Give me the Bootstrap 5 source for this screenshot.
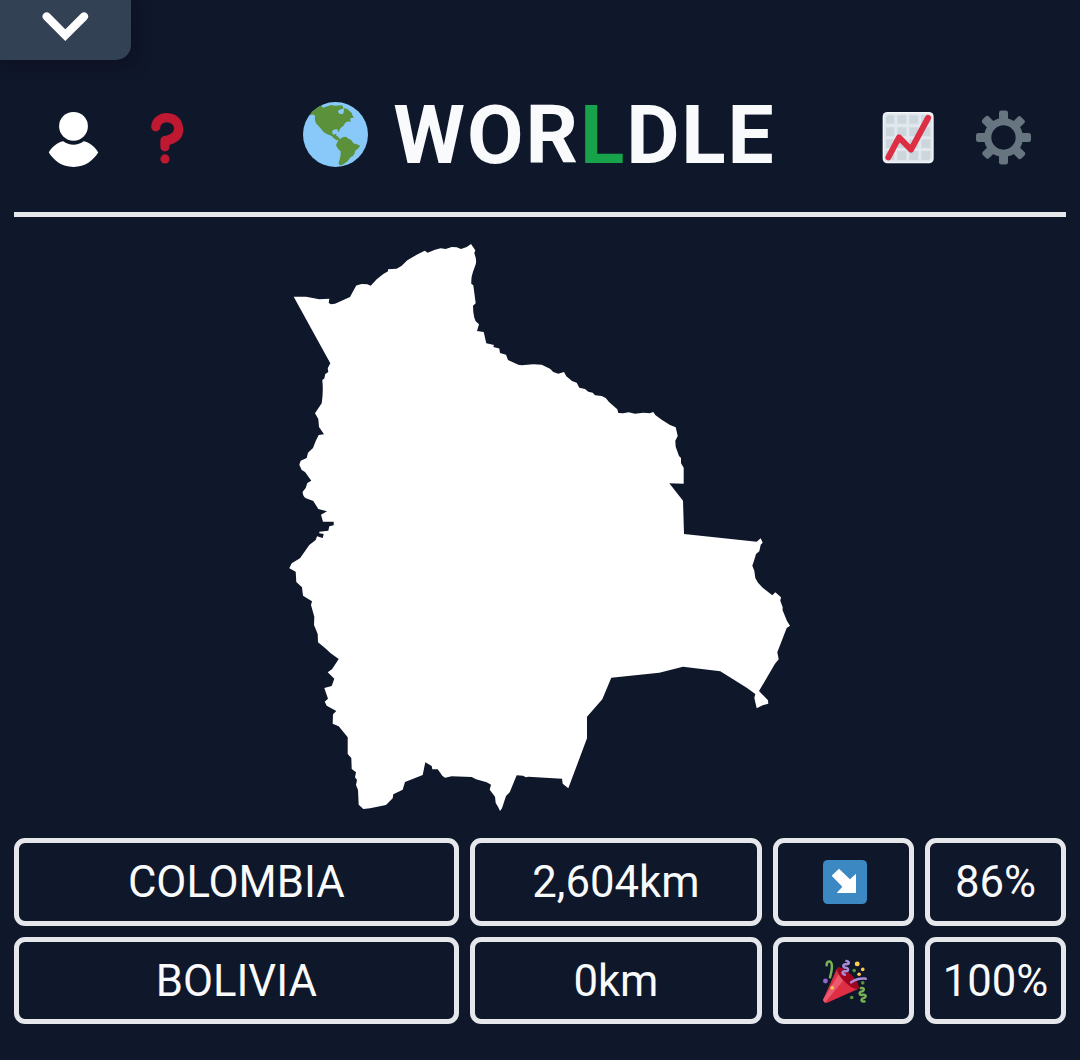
<!DOCTYPE html>
<html lang="en">
<head>
<meta charset="utf-8">
<meta name="viewport" content="width=device-width, initial-scale=1">
<title>Worldle</title>
<link href="https://cdn.jsdelivr.net/npm/bootstrap@5.3.0/dist/css/bootstrap.min.css" rel="stylesheet">
<style>
  body { background: #0f172a; color: #f9fafb; font-family: Roboto, "Liberation Sans", sans-serif; min-height: 1060px; overflow: hidden; }
  svg { display: block; flex: none; }
  .drawer-tab { top: 0; left: 0; width: 131px; height: 60px; background: #334155; border-radius: 0 0 15px 0; box-shadow: 4px 4px 14px 2px rgba(15, 15, 35, .75); }
  .page-shell { padding: 0 14px; }
  .top-bar { height: 217px; border-bottom: 5px solid #e5e7eb; padding: 102px 35px 0 32px; }
  .left-tools { gap: 38px; padding-top: 7px; }
  .help-icon { margin-top: 1px; }
  .right-tools { gap: 40px; padding-top: 7.5px; }
  .brand { gap: 25px; margin-left: 4px; }
  .brand-name { font-size: 82px; line-height: 80px; font-weight: 700; letter-spacing: 1.9px; margin: -7px 0 0; }
  .brand-name span { color: #16a34a; }
  .country-wrap { height: 621px; }
  .guess-grid { display: grid; grid-template-columns: repeat(7, minmax(0, 1fr)); column-gap: 10.9px; row-gap: 11px; grid-template-rows: 88px 87px; }
  .guess-cell { border: 5px solid #e5e7eb; border-radius: 11px; font-size: 43.7px; line-height: 46px; white-space: nowrap; }
  .emoji-cell { padding-left: 2px; }
  .span-3 { grid-column: span 3; }
  .span-2 { grid-column: span 2; }
</style>
<script src="https://cdn.jsdelivr.net/npm/bootstrap@5.3.0/dist/js/bootstrap.bundle.min.js"></script>
</head>
<body>
<button class="drawer-tab position-absolute border-0 p-0" aria-label="Open menu">
  <svg width="131" height="60" viewBox="0 0 131 60"><path d="M46.7 16.5L65.3 35.2L84 16.5" fill="none" stroke="#fff" stroke-width="8.2" stroke-linecap="round"/></svg>
</button>
<div class="page-shell">
  <header class="top-bar d-flex justify-content-between">
    <div class="left-tools d-flex align-self-start">
      <svg width="55" height="60" viewBox="46 109 55 60" fill="#fff"><circle cx="73.5" cy="126.3" r="14.4"/><path d="M48.8 152.5C51.500 147.500 57 142.500 63.300 141.300C69 145.800 78 145.800 83.600 141.300C90 142.500 95.500 147.500 98.200 152.500C93 160.500 85.500 166.900 73.500 166.900C61.500 166.900 54 160.500 48.800 152.500Z"/></svg>
      <svg class="help-icon" width="55" height="55" viewBox="0 0 36 36" fill="#BE1931"><path d="M17 27c-1.657 0-3-1.343-3-3v-4c0-1.657 1.343-3 3-3 .603-.006 6-1 6-5 0-2-2-4-5-4-2.441 0-4 2-4 3 0 1.657-1.343 3-3 3s-3-1.343-3-3c0-4.878 4.580-9 10-9 8 0 11 5.982 11 11 0 4.145-2.277 7.313-6.413 8.920-.9.351-1.790.587-2.587.747V24c0 1.657-1.343 3-3 3z"/><circle cx="17" cy="32" r="3"/></svg>
    </div>
    <div class="brand d-flex align-items-start">
      <svg width="65" height="65" viewBox="39 66 195 195"><circle cx="136.500" cy="163.500" r="97.500" fill="#88C9F9"/><path fill="#5C913B" d="M57 107Q74 84 97 74L96 80Q97 85 103 82Q115 77 125 75L134 77L155 76Q162 81 158 87Q144 88 144 96Q147 103 156 103Q164 99 161 85Q170 84 178 92Q187 98 187 106L192 112Q188 115 181 114L182 125Q172 123 166 128Q160 141 152 144Q147 149 147 157Q144 156 142 148Q131 146 127 153Q125 162 130 164L139 161L139 168Q147 169 146 173L150 177Q156 170 168 170L175 176Q184 177 190 190L205 194Q212 197 209 200Q203 207 196 212Q194 224 188 229Q181 229 178 237Q173 245 161 252Q154 257 149 255Q143 251 149 239Q153 226 152 214Q143 208 138 196L141 188L145 181Q134 180 125 168L110 162Q99 156 91 144L78 130Q73 120 75 108Q72 102 66 104L60 106Z"/></svg>
      <h1 class="brand-name">WOR<span>L</span>DLE</h1>
    </div>
    <div class="right-tools d-flex align-self-start">
      <svg width="55" height="55" viewBox="63 88 165 165"><rect x="68" y="94" width="153" height="154" rx="14" fill="#F5F8FA"/><rect x="72" y="98" width="145" height="146" rx="11" fill="#E1E8ED"/><g fill="#CCD6DD"><path d="M85 104h18v25H78v-18q1-7 7-7zM112 104h27v25h-27zM148 104h27v25h-27zM184 104h20q7 1 7 7v18h-27z"/><path d="M78 140h25v27H78zM112 140h27v27h-27zM148 140h27v27h-27zM184 140h27v27h-27zM78 176h25v26H78zM112 176h27v26h-27zM148 176h27v26h-27zM184 176h27v26h-27zM78 211h25v27H86q-7-1-8-8zM112 211h27v27h-27zM148 211h27v27h-27zM184 211h27v20q-1 6-7 7h-20z"/></g><path d="M85 230L117 170L153 207L204 112" fill="none" stroke="#DD2E44" stroke-width="18" stroke-linecap="round" stroke-linejoin="round"/></svg>
      <svg width="55" height="55" viewBox="348 88.500 165 165"><g fill="#66757F"><g id="teeth"><rect x="417" y="90" width="27" height="40" rx="7"/><rect x="417" y="212" width="27" height="40" rx="7"/><rect x="348" y="157.500" width="40" height="27" rx="7"/><rect x="473" y="157.500" width="40" height="27" rx="7"/></g><use href="#teeth" transform="rotate(45 430.500 171)"/></g><circle cx="430.500" cy="171" r="47.500" fill="none" stroke="#66757F" stroke-width="22"/></svg>
    </div>
  </header>
  <main>
    <div class="country-wrap d-flex justify-content-center">
      <svg width="520" height="621" viewBox="280 217 520 621" fill="#fff" role="img" aria-label="Country outline"><path d="M293.700 296.700L306 296.700L319.300 299.300L329.300 298.700L328.700 303L331 304.300L335 303.700L341.700 300.700L350 297L352.700 292L356.300 285.500L361.700 284L367.300 284.300L370.700 285.700L376.700 279.300L383.300 274L388 271.300V269.300L396.700 268.700L401.700 265.700L407.300 260.300L416.700 254.700L424.700 250.700L427.700 252.700L435 249.700L440.700 248.300L445.700 249L451.700 247L456.700 247.300L461 249L466.700 247L471 244L475.300 250.300L474.300 253.300Q477 260 475.700 264.300L473 271.700Q471 277 471.300 283.700L473.300 285.300L475.700 303.300L473 305.700Q473 313 474.300 317.700L475.700 321.300L479 324.300L477 331L483.700 332L486.300 343.300L494 345L493.300 347L499.300 348.500L500 353L506 354.700L508 360L518.300 364.700L521.700 365.300L533.300 364.300L541.700 364.700L550 368.700L553.300 372L558.300 373.700L564 372L566.300 376.300L572 381L576.700 382.700L579.300 387.700L585 389L588.300 391.700L592.700 392.700L595 395.300L601.700 396L605.700 398L609 402L613.300 405.700L617.300 409.300L618.300 413L623.300 413.300L628.700 412.300L635 413.700L643.300 412.700L649.700 413.300L653.300 412L655.300 415L661.700 419.700L670 425L675.700 427.300L677.700 436L675.300 440.700L675.700 446.700L679 456L681 458V463.300L683.700 467.700V483.700L669.300 483.300L683 500.700L684 534L756.700 541.700L760.700 538.300L762.700 542.700L760.700 544.700L759.300 551.300L756 554L754 560.700L752.300 565.700L754.300 570.700L755.300 578L758 582.700L762.700 587.700L772.300 595.300L775.300 592.300L781 597.300L780.300 600.700L782.700 607.300L782.500 610L787 621L790 625.700L786.700 628L777.300 652.300L778.700 659.300L775 663.700L759 691L768 700.300L768.300 703.700L762.700 705.300L756.700 708.300L754.300 697.700L755.300 694L746.700 687.700L720.300 671.300L683 666.700L659.300 672.700L611.300 677.700L602.300 699.300L587 716.700V738.300L568.300 788.300L562.700 783.700L562 778.700L528.300 776.700L526 777.200L523 775.700L516.700 775.300L509.700 792.300L506 796L502 808.300L500 811L498 806.700L495.700 803L495 796.700L489.700 789.700L491 784.700L486.700 782.300L476 779.300L471.700 777L451.700 776.300L445 777.700L442.300 775.700L437.700 769.300H432.300L431.700 766L425.300 762.300L422.700 775L405 782L402.700 789.700L393.300 794.300L392.700 798.300L386 805L370 808.300L363.300 809L358.700 804.700L358 790L356 785L357 780L355 777.300L356 772.300L351.700 769L351.300 758L347.700 754V737.300L338.700 726.300L332.700 723.700L333 714.300L336.300 711L326.700 705.700L324.700 701.700L328 698.700L324.300 688L331.700 686L334.300 678.700L327.700 672.300L332 669.300L338.700 659L330.700 653.300L325 648L318 642.300L317.700 634L314 625L314.300 616.700L311 605L312 601.300L303 595.700L302 587.300L296.300 582L295.700 571.700L289.300 568.300L291.700 563.300L300 558.300L309.300 545L315.700 540L317 536.300L322.700 538L323.700 534L319.300 533.300V531.700L328.300 530.700L329.300 526.300L333.700 525.300V521.700H323L321 514.700L327 511.300L318.300 509L313.300 501L306 498.300Q302.500 496 302.700 491.700L305.700 488L307.300 483L311.300 480.700L305 472L301.700 470L299.300 464.700L300.700 460.700L306.700 458L308 452.700L313 448L315.700 441L318.700 435L324 434.300L319 427L318.300 419L315 413.300L321.700 403.300Q323.500 392 322.300 380L324.300 378.500L325.300 374L328.300 372L327.700 368.300L330.300 363.300Z"/></svg>
    </div>
    <div class="guess-grid">
      <div class="guess-cell span-3 d-flex align-items-center justify-content-center">COLOMBIA</div>
      <div class="guess-cell span-2 d-flex align-items-center justify-content-center">2,604km</div>
      <div class="guess-cell emoji-cell d-flex align-items-center justify-content-center"><svg width="44" height="44" viewBox="189 90 132 132"><rect x="189" y="90" width="132" height="132" rx="14" fill="#3B88C3"/><path fill="#fff" d="M237 116L215 137L247 170L230 189H288V131L270 148Z"/></svg></div>
      <div class="guess-cell d-flex align-items-center justify-content-center">86%</div>
      <div class="guess-cell span-3 d-flex align-items-center justify-content-center">BOLIVIA</div>
      <div class="guess-cell span-2 d-flex align-items-center justify-content-center">0km</div>
      <div class="guess-cell emoji-cell d-flex align-items-center justify-content-center"><svg width="44" height="44" viewBox="0 0 36 36"><path fill="#DD2E44" d="M11.626 7.488c-.112.112-.197.247-.268.395l-.008-.008L.134 33.141l.011.011c-.208.403.14 1.223.853 1.937.713.713 1.533 1.061 1.936.853l.01.01L28.210 24.735l-.008-.009c.147-.07.282-.155.395-.269 1.562-1.562-.971-6.627-5.656-11.313-4.687-4.686-9.752-7.218-11.315-5.656z"/><path fill="#EA596E" d="M13 12L.416 32.506l-.282.635.011.011c-.208.403.14 1.223.853 1.937.232.232.473.408.709.557L17 17l-4-5z"/><path fill="#A0041E" d="M23.012 13.066c4.670 4.672 7.263 9.652 5.789 11.124-1.473 1.474-6.453-1.118-11.126-5.788-4.671-4.672-7.263-9.654-5.790-11.127 1.474-1.473 6.454 1.119 11.127 5.791z"/><path fill="#AA8DD8" d="M18.590 13.609c-.199.161-.459.245-.734.215-.868-.094-1.598-.396-2.109-.873-.541-.505-.808-1.183-.735-1.862.128-1.192 1.324-2.286 3.363-2.066.793.085 1.147-.17 1.159-.292.014-.121-.277-.446-1.070-.532-.868-.094-1.598-.396-2.110-.873-.541-.505-.809-1.183-.735-1.862.13-1.192 1.325-2.286 3.362-2.065.578.062.883-.057 1.012-.134.103-.063.144-.123.148-.158.012-.121-.275-.446-1.070-.532-.549-.06-.947-.552-.886-1.102.059-.549.55-.946 1.101-.886 2.037.219 2.973 1.542 2.844 2.735-.13 1.194-1.325 2.286-3.364 2.067-.578-.063-.88.057-1.010.134-.103.062-.145.123-.149.157-.013.122.276.446 1.071.532 2.037.22 2.973 1.542 2.844 2.735-.129 1.192-1.324 2.286-3.362 2.065-.578-.062-.882.058-1.012.134-.104.064-.144.124-.148.158-.013.121.276.446 1.070.532.548.06.947.553.886 1.102-.028.274-.167.511-.366.671z"/><path fill="#77B255" d="M30.661 22.857c1.973-.557 3.334.323 3.658 1.478.324 1.154-.378 2.615-2.350 3.170-.77.216-1.001.584-.97.701.034.118.425.312 1.193.095 1.972-.555 3.333.325 3.657 1.479.326 1.155-.378 2.614-2.351 3.170-.769.216-1.001.585-.967.702.033.117.423.311 1.192.095.53-.149 1.084.16 1.233.691.148.532-.161 1.084-.693 1.234-1.971.555-3.333-.323-3.659-1.479-.324-1.154.379-2.613 2.353-3.169.77-.217 1.001-.584.967-.702-.032-.117-.422-.312-1.190-.096-1.974.556-3.334-.322-3.659-1.479-.325-1.154.378-2.613 2.351-3.170.768-.215.999-.585.967-.701-.034-.118-.423-.312-1.192-.096-.532.15-1.083-.16-1.233-.691-.149-.53.161-1.082.693-1.232z"/><path fill="#AA8DD8" d="M23.001 20.160c-.294 0-.584-.129-.782-.375-.345-.432-.274-1.061.156-1.406.218-.175 5.418-4.259 12.767-3.208.547.078.927.584.849 1.131-.078.546-.58.93-1.132.848-6.493-.922-11.187 2.754-11.233 2.791-.186.148-.406.219-.625.219z"/><path fill="#77B255" d="M5.754 16c-.095 0-.192-.014-.288-.042-.529-.159-.829-.716-.67-1.245 1.133-3.773 2.160-9.794.898-11.364-.141-.178-.354-.353-.842-.316-.938.072-.849 2.051-.848 2.071.042.551-.372 1.031-.922 1.072-.559.034-1.031-.372-1.072-.923-.103-1.379.326-4.035 2.692-4.214 1.056-.08 1.933.287 2.552 1.057 2.371 2.951-.036 11.506-.542 13.192-.13.433-.528.712-.958.712z"/><circle fill="#9266CC" cx="2" cy="18" r="2"/><g fill="#5C913B"><circle cx="25.500" cy="9.500" r="1.500"/><circle cx="32.500" cy="19.500" r="1.500"/><circle cx="23.500" cy="31.500" r="1.500"/></g><g fill="#FFCC4D"><circle cx="28" cy="4" r="2"/><circle cx="32.500" cy="8.500" r="1.500"/><circle cx="29.500" cy="12.500" r="1.500"/><circle cx="7.500" cy="23.500" r="1.500"/></g></svg></div>
      <div class="guess-cell d-flex align-items-center justify-content-center">100%</div>
    </div>
  </main>
</div>
</body>
</html>
